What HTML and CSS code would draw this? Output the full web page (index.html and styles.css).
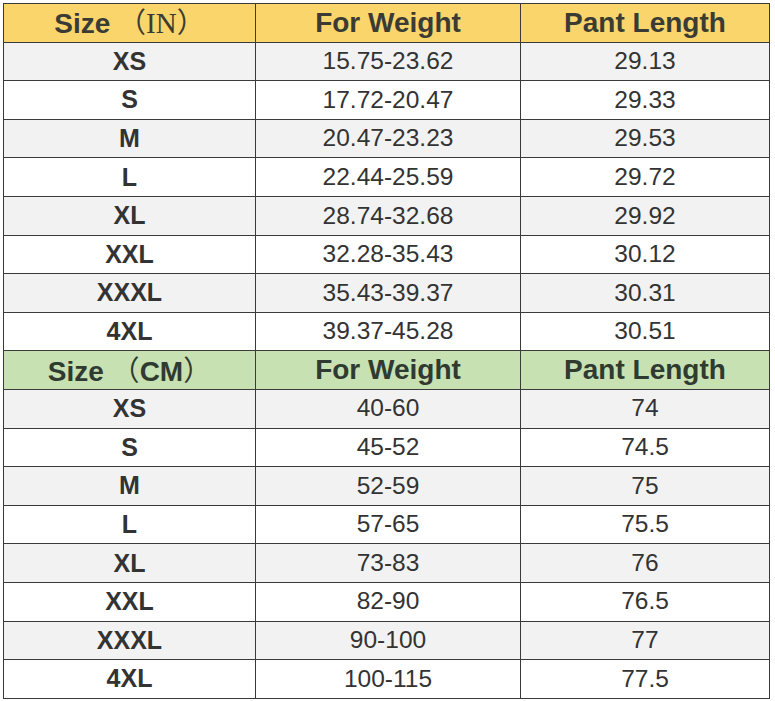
FILE: index.html
```html
<!DOCTYPE html>
<html>
<head>
<meta charset="utf-8">
<link rel="stylesheet" href="styles.css">
</head>
<body>
<table class="chart">
  <colgroup><col class="c1"><col class="c2"><col class="c3"></colgroup>
  <tr class="head yellow"><th>Size <span class="par">（</span><span class="serif">IN</span><span class="par">）</span></th><th>For Weight</th><th>Pant Length</th></tr>
  <tr class="alt"><td class="sz">XS</td><td>15.75-23.62</td><td>29.13</td></tr>
  <tr><td class="sz">S</td><td>17.72-20.47</td><td>29.33</td></tr>
  <tr class="alt"><td class="sz">M</td><td>20.47-23.23</td><td>29.53</td></tr>
  <tr><td class="sz">L</td><td>22.44-25.59</td><td>29.72</td></tr>
  <tr class="alt"><td class="sz">XL</td><td>28.74-32.68</td><td>29.92</td></tr>
  <tr><td class="sz">XXL</td><td>32.28-35.43</td><td>30.12</td></tr>
  <tr class="alt"><td class="sz">XXXL</td><td>35.43-39.37</td><td>30.31</td></tr>
  <tr><td class="sz">4XL</td><td>39.37-45.28</td><td>30.51</td></tr>
  <tr class="head green"><th>Size <span class="par">（</span>CM<span class="par">）</span></th><th>For Weight</th><th>Pant Length</th></tr>
  <tr class="alt"><td class="sz">XS</td><td>40-60</td><td>74</td></tr>
  <tr><td class="sz">S</td><td>45-52</td><td>74.5</td></tr>
  <tr class="alt"><td class="sz">M</td><td>52-59</td><td>75</td></tr>
  <tr><td class="sz">L</td><td>57-65</td><td>75.5</td></tr>
  <tr class="alt"><td class="sz">XL</td><td>73-83</td><td>76</td></tr>
  <tr><td class="sz">XXL</td><td>82-90</td><td>76.5</td></tr>
  <tr class="alt"><td class="sz">XXXL</td><td>90-100</td><td>77</td></tr>
  <tr><td class="sz">4XL</td><td>100-115</td><td>77.5</td></tr>
</table>
</body>
</html>
```
FILE: styles.css
```css
html, body {
  margin: 0;
  padding: 0;
  background: #ffffff;
}
body {
  padding: 3px 0 0 3px;
  font-family: "Liberation Sans", Arial, sans-serif;
  color: #333333;
}
.chart {
  border-collapse: collapse;
  width: 766px;
  table-layout: fixed;
}
.c1 { width: 252px; }
.c2 { width: 265px; }
.c3 { width: 249px; }
.chart th, .chart td {
  border: 1.5px solid #3a3a3a;
  height: 38.6px;
  padding: 0;
  text-align: center;
  vertical-align: middle;
  box-sizing: border-box;
  line-height: 1;
}
.chart th {
  font-size: 28px;
  font-weight: bold;
  color: #3b3b35;
}
.chart td {
  font-size: 24.5px;
  font-weight: normal;
  color: #333333;
}
.chart td.sz {
  font-weight: bold;
  font-size: 25px;
}
.yellow th { background: #f9d56b; }
.green th { background: #c8e1b2; color: #2f3a30; }
.alt td { background: #f2f2f2; }
.par {
  font-family: "Noto Sans CJK SC", sans-serif;
  font-weight: normal;
}
.serif {
  font-family: "Liberation Serif", serif;
  font-weight: normal;
  font-size: 29px;
}
```
